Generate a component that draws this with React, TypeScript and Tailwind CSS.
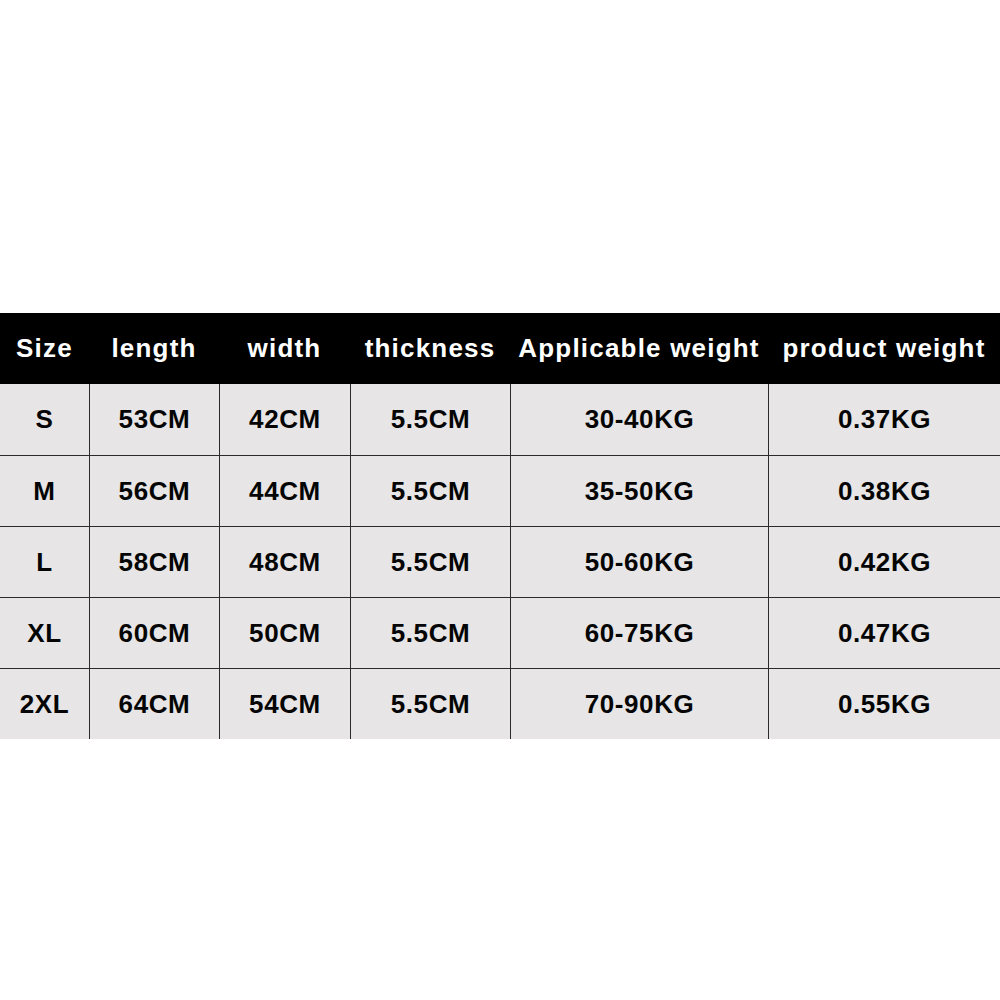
import React from 'react';

const headers = ['Size', 'length', 'width', 'thickness', 'Applicable weight', 'product weight'];

const rows = [
  ['S', '53CM', '42CM', '5.5CM', '30-40KG', '0.37KG'],
  ['M', '56CM', '44CM', '5.5CM', '35-50KG', '0.38KG'],
  ['L', '58CM', '48CM', '5.5CM', '50-60KG', '0.42KG'],
  ['XL', '60CM', '50CM', '5.5CM', '60-75KG', '0.47KG'],
  ['2XL', '64CM', '54CM', '5.5CM', '70-90KG', '0.55KG'],
];

const cols = 'grid grid-cols-[89px_130px_131px_160px_258px_232px]';

export default function App() {
  return (
    <div className="w-[1000px] h-[1000px] bg-white font-['Liberation_Sans',Arial,sans-serif] font-bold">
      <div className="h-[313px]" />
      <div className={`${cols} h-[71px] bg-black text-white text-[26px] tracking-[1.2px]`}>
        {headers.map((h) => (
          <div key={h} className="flex items-center justify-center whitespace-nowrap">
            {h}
          </div>
        ))}
      </div>
      {rows.map((row, i) => (
        <div
          key={row[0]}
          className={`${cols} h-[71px] bg-[#e7e5e5] text-[#050505] text-[26px] tracking-[0.6px] ${i > 0 ? 'border-t border-[#2a2a2a]' : ''}`}
        >
          {row.map((cell, j) => (
            <div
              key={j}
              className={`flex items-center justify-center ${j > 0 ? 'border-l border-[#2a2a2a]' : ''}`}
            >
              {cell}
            </div>
          ))}
        </div>
      ))}
    </div>
  );
}
